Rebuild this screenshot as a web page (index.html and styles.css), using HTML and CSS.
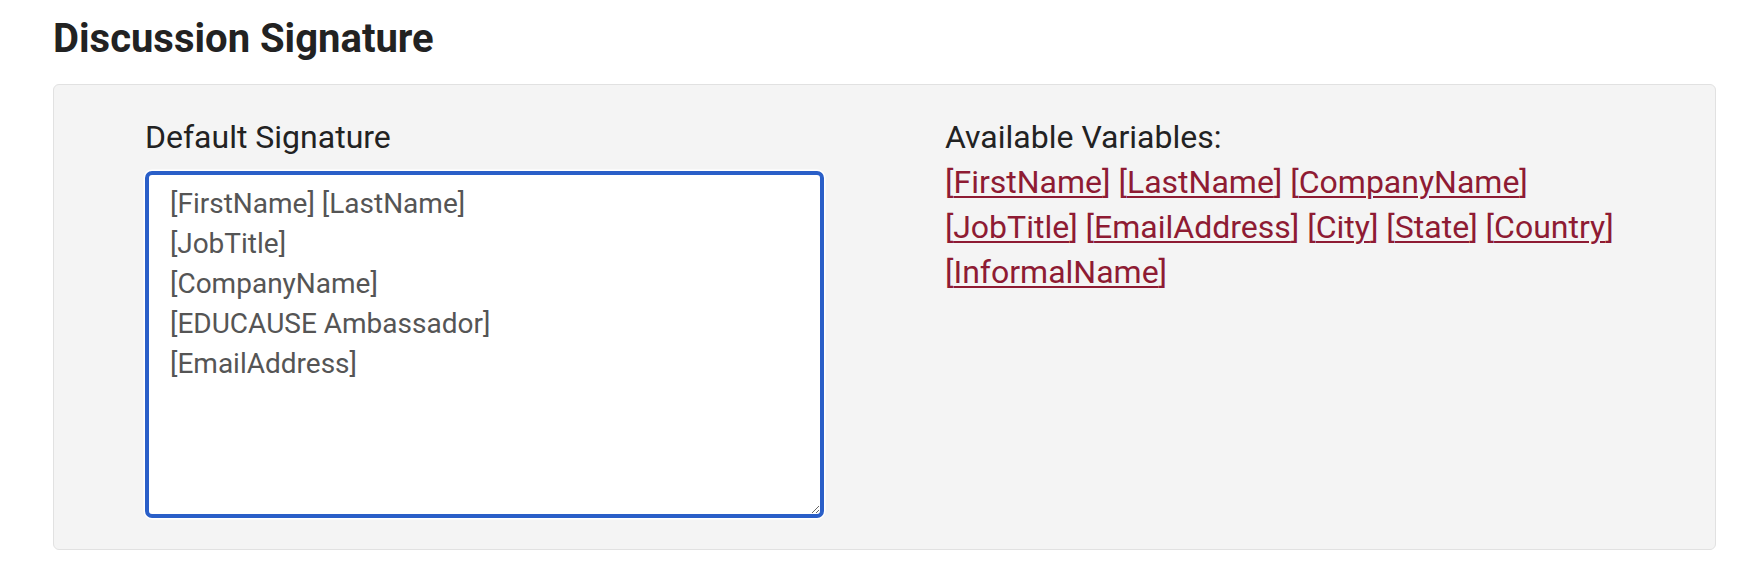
FILE: index.html
```html
<!DOCTYPE html>
<html lang="en">
<head>
  <meta charset="UTF-8">
  <meta name="viewport" content="width=device-width, initial-scale=1.0">
  <link rel="stylesheet" href="styles.css">
</head>
<body>

<h1 class="section-title">Discussion Signature</h1>

<div class="signature-panel">
  <div class="signature-field">
    <label class="field-label" for="default-signature">Default Signature</label>
    <textarea id="default-signature" class="signature-input">[FirstName] [LastName]
[JobTitle]
[CompanyName]
[EDUCAUSE Ambassador]
[EmailAddress]</textarea>
  </div>

  <div class="signature-vars">
    <div class="field-label">Available Variables:</div>
    <div class="var-list">
      <span class="var">[<a href="#">FirstName</a>]</span>
      <span class="var">[<a href="#">LastName</a>]</span>
      <span class="var">[<a href="#">CompanyName</a>]</span>
      <span class="var">[<a href="#">JobTitle</a>]</span>
      <span class="var">[<a href="#">EmailAddress</a>]</span>
      <span class="var">[<a href="#">City</a>]</span>
      <span class="var">[<a href="#">State</a>]</span>
      <span class="var">[<a href="#">Country</a>]</span>
      <span class="var">[<a href="#">InformalName</a>]</span>
    </div>
  </div>
</div>

</body>
</html>
```

FILE: styles.css
```css
body {
  font-family: Roboto, "Liberation Sans", Arial, sans-serif;
  color: #222222;
  margin: 0;
  padding: 15px 44px 0 53px;
  background-color: #ffffff;
}
.section-title {
  font-size: 40px;
  line-height: 48px;
  font-weight: 700;
  color: #222222;
  margin: 0 0 21px 0;
}
.signature-panel {
  display: grid;
  grid-template-columns: 679px 679px;
  column-gap: 121px;
  background-color: #f4f4f4;
  border: 1px solid #e1e1e1;
  border-radius: 6px;
  padding: 30px 90px 31px 91px;
}
.field-label {
  display: block;
  font-size: 32px;
  line-height: 45px;
  color: #222222;
}
.signature-field .field-label {
  margin-bottom: 11px;
}
.signature-input {
  display: block;
  box-sizing: border-box;
  width: 679px;
  height: 347px;
  margin: 0;
  padding: 9px 21px;
  border: 4px solid #2a5fc8;
  border-radius: 7px;
  box-shadow: 0 0 0 1.5px #ffffff;
  outline: none;
  background-color: #ffffff;
  font-family: Roboto, "Liberation Sans", Arial, sans-serif;
  font-size: 28px;
  line-height: 40px;
  color: #555555;
}
.var-list {
  font-size: 32px;
  line-height: 45px;
}
.var {
  color: #8e1b33;
}
.var a {
  color: #8e1b33;
  text-decoration: underline;
  text-decoration-thickness: 2px;
  text-underline-offset: 3px;
}
```
